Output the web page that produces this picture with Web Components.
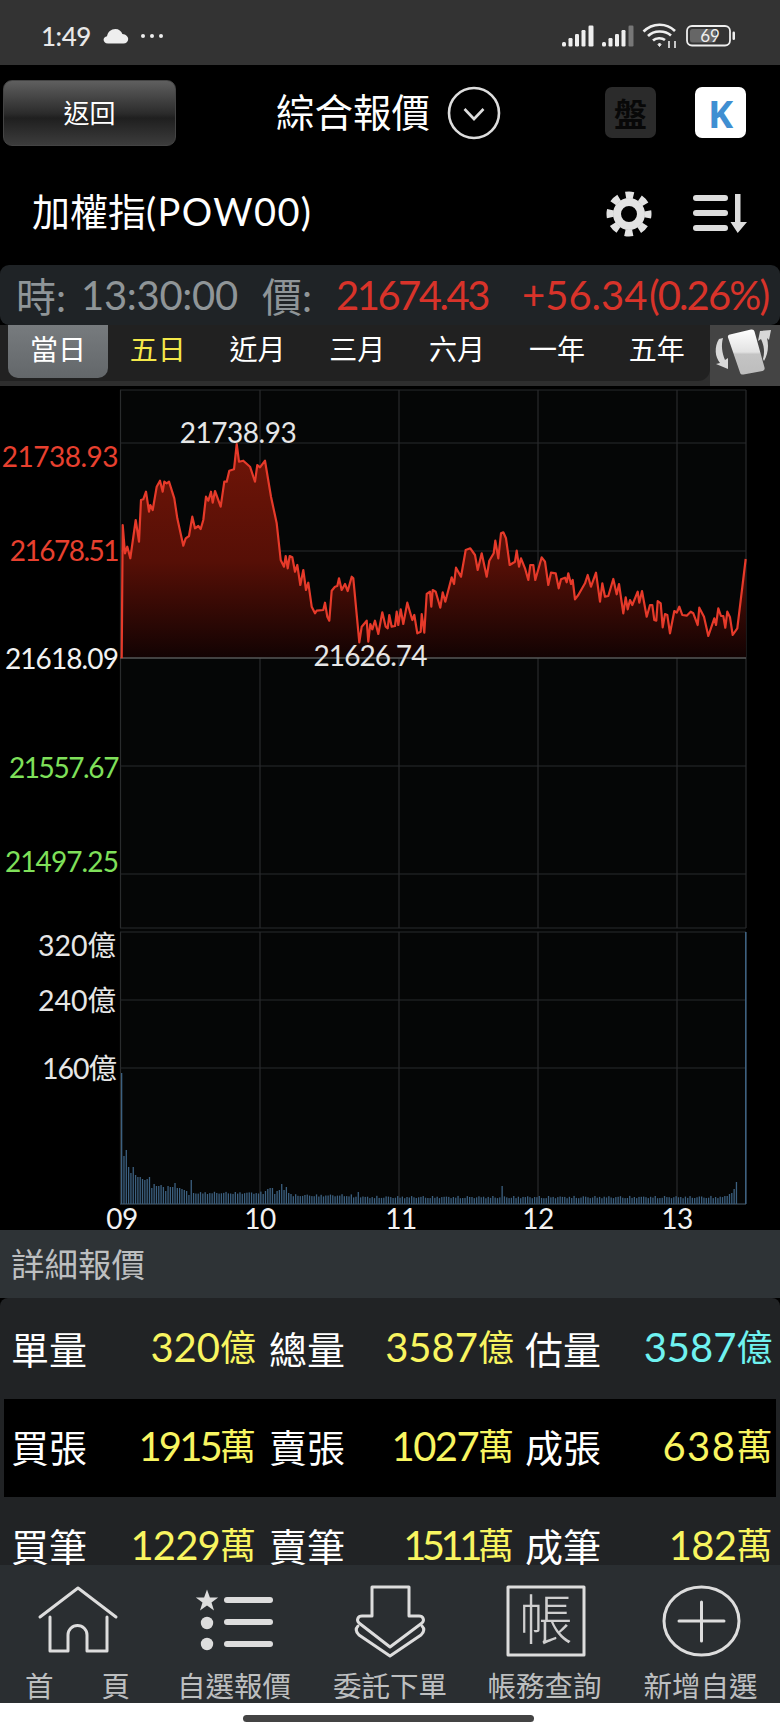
<!DOCTYPE html>
<html lang="zh-Hant">
<head>
<meta charset="utf-8">
<title>綜合報價</title>
<style>
  html, body { margin: 0; padding: 0; background: #000; }
  body { width: 780px; height: 1734px; overflow: hidden; font-family: Lato, "Noto Sans CJK TC", sans-serif; color: #fff; }
</style>
</head>
<body>
<x-status-bar></x-status-bar>
<x-nav-bar title-text="綜合報價" back-text="返回"></x-nav-bar>
<x-symbol-bar>加權指<span style="letter-spacing:1.4px">(POW00)</span></x-symbol-bar>
<x-quote-bar time="13:30:00" price="21674.43" change="+56.34" percent="(0.26%)"></x-quote-bar>
<x-range-tabs></x-range-tabs>
<x-quote-chart></x-quote-chart>
<x-section-title>詳細報價</x-section-title>
<x-stat-table>
  <x-stat-row>
    <x-stat label="單量" value="320" unit="億"></x-stat>
    <x-stat label="總量" value="3587" unit="億"></x-stat>
    <x-stat label="估量" value="3587" unit="億" tone="cyan"></x-stat>
  </x-stat-row>
  <x-stat-row dark>
    <x-stat label="買張" value="1915" unit="萬" tight="-2.8"></x-stat>
    <x-stat label="賣張" value="1027" unit="萬" tight="-1.6"></x-stat>
    <x-stat label="成張" value="638" unit="萬" tight="1.5"></x-stat>
  </x-stat-row>
  <x-stat-row>
    <x-stat label="買筆" value="1229" unit="萬" tight="-.8"></x-stat>
    <x-stat label="賣筆" value="1511" unit="萬" tight="-4.5"></x-stat>
    <x-stat label="成筆" value="182" unit="萬" tight="-.6"></x-stat>
  </x-stat-row>
</x-stat-table>
<x-tab-bar>
  <x-tab-item icon="home" wide>首頁</x-tab-item>
  <x-tab-item icon="list">自選報價</x-tab-item>
  <x-tab-item icon="order">委託下單</x-tab-item>
  <x-tab-item icon="account">帳務查詢</x-tab-item>
  <x-tab-item icon="plus">新增自選</x-tab-item>
</x-tab-bar>
<x-home-indicator></x-home-indicator>

<script>
  const FONT = 'Lato, "Noto Sans CJK TC", sans-serif';

  function signalBars(lastColor) {
    return `<svg width="33" height="22" viewBox="0 0 33 22">
      <rect x="0" y="17" width="4" height="4.5" rx="1.5" fill="#eee"/>
      <rect x="6.5" y="13" width="4" height="8.5" rx="1.2" fill="#eee"/>
      <rect x="13" y="9" width="4" height="12.5" rx="1.2" fill="#eee"/>
      <rect x="19.5" y="5" width="4" height="16.5" rx="1.2" fill="#eee"/>
      <rect x="26.5" y="0.5" width="5" height="21" rx="1.2" fill="${lastColor}"/>
    </svg>`;
  }

  customElements.define("x-status-bar", class extends HTMLElement {
    connectedCallback() {
      this.attachShadow({ mode: "open" }).innerHTML = `
        <style>
          :host { display: flex; align-items: center; height: 65px; padding: 7px 44px 0 41px; box-sizing: border-box; background: #333; color: #e8e8e8; font: 500 26px ${FONT}; }
          .time { width: 62px; letter-spacing: -.5px; }
          .right { margin-left: auto; display: flex; align-items: center; }
          svg { display: block; }
          .batt { position: relative; width: 50px; height: 22px; margin-left: 8px; }
          .batt span { position: absolute; left: 10px; top: 0; width: 28px; text-align: center; font: 17px/21px ${FONT}; color: #eee; }
        </style>
        <span class="time">1:49</span>
        <svg width="26" height="16" viewBox="0 0 26 16"><path d="M5 15.5C2 15.5 .6 13.6 .6 11.8 .6 9.8 2 8.5 4 8.2 4.8 4 8 1 12.4 1c3.4 0 6 2 7 5 3.4 .1 5.8 2.6 5.8 5 0 2.5-2 4.5-4.8 4.5z" fill="#eee"/></svg>
        <svg width="24" height="6" viewBox="0 0 24 6" style="margin-left:11px"><circle cx="3" cy="3" r="2" fill="#eee"/><circle cx="12" cy="3" r="2" fill="#eee"/><circle cx="21" cy="3" r="2" fill="#eee"/></svg>
        <div class="right">
          ${signalBars("#eee")}
          <span style="width:7px"></span>
          ${signalBars("#777")}
          <svg width="36" height="26" viewBox="0 0 36 26" style="margin-left:7px" fill="none" stroke="#eee" stroke-width="2.6">
            <path d="M1.5 8.5C10.5 -.5 24.5 -.5 33 8"/>
            <path d="M6 13C12 7 23 7 29 12.5"/>
            <path d="M11 17.5C14 14.5 20 14.5 23 17"/>
            <path d="M16 21.5l1.5-1.5 1.5 1.5-1.5 2z" fill="#eee" stroke-width="1"/>
            <path d="M27 18v7M33 18v7" stroke-width="1.6"/>
          </svg>
          <div class="batt">
            <svg width="50" height="22" viewBox="0 0 50 22">
              <rect x="1" y="1" width="43" height="19.5" rx="5" fill="none" stroke="#eee" stroke-width="1.8"/>
              <rect x="4" y="4" width="26" height="13.5" rx="2.5" fill="#666"/>
              <rect x="46.5" y="6.5" width="2.5" height="8.5" rx="1.2" fill="#eee"/>
            </svg>
            <span>69</span>
          </div>
        </div>`;
    }
  });

  customElements.define("x-nav-bar", class extends HTMLElement {
    connectedCallback() {
      this.attachShadow({ mode: "open" }).innerHTML = `
        <style>
          :host { display: flex; align-items: center; height: 95px; box-sizing: border-box; padding: 0 34px 0 3px; background: #000; color: #fff; }
          .back { width: 173px; height: 66px; margin-top: 1px; padding-bottom: 3px; border-radius: 9px; border: 1px solid #444; box-sizing: border-box;
            background: linear-gradient(#5f5f5f, #2c2c2c 50%, #1f1f1f 58%, #3c3c3c);
            display: flex; align-items: center; justify-content: center; font-size: 26px; }
          .title { margin: -6px 0 0 100px; font-size: 38.5px; width: 171px; white-space: nowrap; }
          .badge { width: 51px; height: 51px; border-radius: 7px; display: flex; align-items: center; justify-content: center; }
          .pan { margin-left: 104px; background: #2b2b2b; color: #080808; font-size: 33px; font-weight: 700; }
          .k { margin-left: 39px; background: #fff; color: #3f8fd2; font: 700 38px "Open Sans", sans-serif; }
          svg { display: block; }
        </style>
        <div class="back">${this.getAttribute("back-text")}</div>
        <div class="title">${this.getAttribute("title-text")}</div>
        <svg width="54" height="54" viewBox="0 0 54 54" fill="none" stroke="#ddd" stroke-width="2.6">
          <circle cx="27" cy="27" r="25"/>
          <path d="M17.5 23l9.5 10 9.5-10"/>
        </svg>
        <div class="badge pan">盤</div>
        <div class="badge k">K</div>`;
    }
  });

  customElements.define("x-symbol-bar", class extends HTMLElement {
    connectedCallback() {
      this.attachShadow({ mode: "open" }).innerHTML = `
        <style>
          :host { display: flex; align-items: center; height: 105px; box-sizing: border-box; padding: 0 32px; background: #000; color: #fff; font-size: 38px; }
          .name { flex: 1; margin-top: -6px; white-space: nowrap; }
          svg { display: block; margin-top: 3px; }
        </style>
        <div class="name"><slot></slot></div>
        <svg width="46" height="46" viewBox="-23 -23 46 46" fill="none" stroke="#e2e2e2">
          <circle r="12" stroke-width="8"/>
          <circle r="19" stroke-width="7" stroke-dasharray="8 6.92" stroke-dashoffset="4"/>
        </svg>
        <svg width="56" height="40" viewBox="0 0 56 40" style="margin-left:40px">
          <g fill="#ddd">
            <rect x="1" y="1" width="35" height="6" rx="3"/>
            <rect x="1" y="16" width="35" height="6" rx="3"/>
            <rect x="1" y="31" width="35" height="6" rx="3"/>
            <path d="M43 0h5.5v28H55L45.7 39 38.5 28H43z"/>
          </g>
        </svg>`;
    }
  });

  customElements.define("x-quote-bar", class extends HTMLElement {
    connectedCallback() {
      const a = (n) => this.getAttribute(n);
      this.attachShadow({ mode: "open" }).innerHTML = `
        <style>
          :host { display: flex; align-items: center; height: 60px; box-sizing: border-box; padding-left: 16px; background: #1f2326; border-radius: 9px; color: #8f9598; font-size: 40px; white-space: nowrap; }
          span { display: block; }
          .red { color: #d8332a; }
        </style>
        <span style="width:65px">時:</span>
        <span style="width:181px;letter-spacing:-.3px">${a("time")}</span>
        <span style="width:74px">價:</span>
        <span class="red" style="width:186px;letter-spacing:-2.5px">${a("price")}</span>
        <span class="red" style="width:127px">${a("change")}</span>
        <span class="red" style="letter-spacing:-1.9px">${a("percent")}</span>`;
    }
  });

  customElements.define("x-range-tabs", class extends HTMLElement {
    connectedCallback() {
      const labels = ["當日", "五日", "近月", "三月", "六月", "一年", "五年"];
      this.attachShadow({ mode: "open" }).innerHTML = `
        <style>
          :host { display: flex; height: 61px; background: #2e2e2e; color: #fff; font-size: 28px; }
          .tabs { width: 710px; height: 56px; box-sizing: border-box; padding-left: 8px; background: #212121; border-radius: 0 0 12px 0; display: flex; }
          .tab { width: 99.8px; height: 53px; padding-bottom: 8px; box-sizing: border-box; display: flex; align-items: center; justify-content: center; }
          .on { background: linear-gradient(#777b7e, #63676a); border-radius: 0 0 10px 10px; }
          .tab:nth-child(2) { color: #f4e84a; }
          .rotate { flex: 1; background: #444; }
          svg { display: block; }
        </style>
        <div class="tabs">
          ${labels.map((t, i) => `<div class="tab ${i == 0 ? "on" : ""}">${t}</div>`).join("")}
        </div>
        <div class="rotate">
          <svg width="70" height="61" viewBox="0 0 70 61">
            <defs><linearGradient id="ph" x1="0" y1="0" x2="0" y2="1"><stop offset="0" stop-color="#fff"/><stop offset=".5" stop-color="#e2e2e2"/><stop offset=".55" stop-color="#c4c4c4"/><stop offset="1" stop-color="#bdbdbd"/></linearGradient></defs>
            <path d="M9 14C4 22 5 32 10 38l-4 1 12 5 0-11-3 2C12 28 11 20 13 13z" fill="#d8d8d8"/>
            <path d="M50 6l11-1-2 10-2-2c2 8 1 16-3 23l-1-2c2-7 1-14-2-20l-3 2z" fill="#d8d8d8"/>
            <path d="M20 9.5l21-5c2-.4 3 .4 3.5 2l10 36c.5 2-.3 3-2 3.5l-19 3.5c-2 .3-3-.3-3.5-2L18 12.5c-.4-1.5 .3-2.6 2-3z" fill="url(#ph)"/>
          </svg>
        </div>`;
    }
  });

  // traced line of the day chart: each run has its own offset and 3x coordinates
  const RUNS = [
    { ox: 115, oy: 430, pts: "20,685 23,285 30,370 37,350 46,385 62,270 72,335 78,210 85,208 93,185 102,245 106,225 113,240 125,170 135,152 143,185 148,155 155,160 162,155 178,205 187,265 205,347 212,325 222,318 232,260 240,295 250,288 257,297 265,270 273,200 280,212 288,185 293,218 300,183 317,230 328,155 335,155 343,122 357,118 365,42 372,95 385,92 405,110 420,155 427,105 435,112 450,92 468,200 485,280 497,390 507,410 512,378 518,415 524,378 532,382 540,425 547,405 556,465 565,420 573,480 580,458 590,530 600,550 605,542 625,540 630,518 637,560 643,572 650,482 660,470 667,468 672,445" },
    { ox: 335, oy: 510, pts: "12,205 20,240 30,222 38,243 50,200 55,205 73,397 80,350 95,332 100,395 106,342 112,358 120,332 130,372 142,307 152,350 158,355 163,315 170,350 180,348 185,305 190,345 197,298 205,342 217,278 232,330 238,315 247,370 257,365 260,312 268,368 275,252 285,245 289,290 293,240 302,245 316,293 323,247 331,275 350,202 357,222 363,173 378,200 392,120 406,115 420,135 428,180 440,130 455,200 463,152 476,130 481,92 490,145 498,70 505,67 513,85 524,165 540,155 545,122 552,170 558,145 570,175 580,210 586,165 595,165 601,210 620,142 630,155" },
    { ox: 545, oy: 530, pts: "10,165 18,128 32,130 41,175 48,148 60,143 65,157 70,130 78,162 83,150 90,208 100,195 120,160 128,135 138,170 153,128 165,215 172,160 180,200 190,198 205,147 215,193 222,162 235,250 242,202 248,238 255,210 262,225 278,185 283,218 291,183 305,260 315,225 322,225 328,270 334,272 338,213 347,220 353,292 360,252 367,255 375,310 388,243 395,248 403,230 412,255 425,257 437,245 445,250 458,285 463,233 477,260 490,318 508,265 513,285 520,235 528,258 535,258 541,293 547,245 555,262 563,315 577,295 602,87" },
  ];

  function linePoints() {
    const out = [];
    for (const run of RUNS) {
      for (const p of run.pts.split(" ")) {
        const [x, y] = p.split(",").map(Number);
        out.push((run.ox + x / 3).toFixed(1) + "," + (run.oy + y / 3).toFixed(1));
      }
    }
    return out.join(" ");
  }

  const FIRST_BARS = [131, 48, 54, 37, 31, 37, 29, 27, 27, 25, 24, 25, 27, 16, 20, 18, 18, 19, 17, 13, 18, 17, 17, 21, 16, 16, 15, 14, 13, 9, 24, 11];
  const BUMP_BARS = { 62: 13, 63: 15, 64: 16, 65: 16, 66: 10, 67: 13, 68: 14, 69: 20, 70: 14, 71: 17, 72: 11, 73: 10, 102: 12, 164: 18, 260: 8, 261: 8, 262: 10, 263: 11, 264: 15, 265: 22 };

  function volumeBars() {
    let s = "";
    for (let i = 0; i < 266; i++) {
      let h = FIRST_BARS[i] || BUMP_BARS[i];
      if (!h) {
        const base = i < 62 ? 10 : i < 100 ? 7.5 : 5.8;
        h = base + 2.4 * Math.abs(Math.sin(i * 1.7) * Math.cos(i * 0.63));
      }
      s += `<rect x="${(121 + i * 2.32).toFixed(2)}" y="${(1204 - h).toFixed(1)}" width="1.3" height="${h.toFixed(1)}"/>`;
    }
    return s + `<rect x="745" y="932" width="1.5" height="272"/>`;
  }

  customElements.define("x-quote-chart", class extends HTMLElement {
    connectedCallback() {
      const pts = linePoints();
      const verticals = [120.5, 260, 399, 538, 677, 746];
      const vLines = (y1, y2) => verticals.map((x) => `<line x1="${x}" x2="${x}" y1="${y1}" y2="${y2}"/>`).join("");
      const hLines = (ys) => ys.map((y) => `<line x1="120" x2="746" y1="${y}" y2="${y}"/>`).join("");
      // labels sit over the plot, x and y are page coordinates
      const end = (x, y, text, color, ls = -.5, cls = "") =>
        `<span class="${cls}" style="right:${780 - x}px;top:${y - 386}px;color:${color};letter-spacing:${ls}px;transform:translateY(-50%)">${text}</span>`;
      const mid = (x, y, text, color, ls = -.5) =>
        `<span style="left:${x}px;top:${y - 386}px;color:${color};letter-spacing:${ls}px;transform:translate(-50%,-50%)">${text}</span>`;
      this.attachShadow({ mode: "open" }).innerHTML = `
        <style>
          :host { display: block; position: relative; height: 844px; background: #000; }
          svg { display: block; }
          span { position: absolute; font-size: 28px; line-height: 34px; white-space: nowrap; }
          .vol { font-size: 28.5px; }
        </style>
        <svg width="780" height="844" viewBox="0 386 780 844">
          <defs>
            <linearGradient id="area" x1="0" y1="0" x2="0" y2="1">
              <stop offset="0" stop-color="#701508"/>
              <stop offset=".55" stop-color="#560f06"/>
              <stop offset="1" stop-color="#120303"/>
            </linearGradient>
          </defs>
          <rect x="120" y="390" width="626" height="814" fill="#050606"/>
          <g stroke="#292b2c" stroke-width="1.2">
            ${vLines(390, 928)}${hLines([390, 443, 551, 766, 874, 928])}
            ${vLines(932, 1204)}${hLines([932, 1000, 1068])}
          </g>
          <polygon points="${pts} 746,658 121,658" fill="url(#area)"/>
          <line x1="120" x2="746" y1="658" y2="658" stroke="#565859" stroke-width="1.5"/>
          <line x1="120" x2="746" y1="1204" y2="1204" stroke="#34404a" stroke-width="1.5"/>
          <polyline points="${pts}" fill="none" stroke="#e63a2a" stroke-width="2.2" stroke-linejoin="round"/>
          <g fill="#3c6080">${volumeBars()}</g>
        </svg>
        ${end(118, 456, "21738.93", "#e8402f")}
        ${end(118, 550, "21678.51", "#e8402f", -1.5)}
        ${end(118, 658, "21618.09", "#f2f2f2", -.9)}
        ${end(118, 767, "21557.67", "#7fe05a", -1.4)}
        ${end(118, 861, "21497.25", "#7fe05a", -.9)}
        ${mid(238, 432, "21738.93", "#e6e6e6")}
        ${mid(370, 655, "21626.74", "#e6e6e6", -.9)}
        ${end(116, 945, "320億", "#e6e6e6", 0, "vol")}
        ${end(116, 1000, "240億", "#e6e6e6", 0, "vol")}
        ${end(116, 1068, "160億", "#e6e6e6", -1, "vol")}
        ${mid(122, 1218, "09", "#f2f2f2")}
        ${mid(260, 1218, "10", "#f2f2f2")}
        ${mid(401, 1218, "11", "#f2f2f2")}
        ${mid(538, 1218, "12", "#f2f2f2")}
        ${mid(677, 1218, "13", "#f2f2f2")}`;
    }
  });

  customElements.define("x-section-title", class extends HTMLElement {
    connectedCallback() {
      this.attachShadow({ mode: "open" }).innerHTML = `
        <style>
          :host { display: flex; align-items: center; height: 68px; box-sizing: border-box; padding: 0 0 4px 11px; background: #2e3336; color: #bdbfc0; font-size: 33.5px; }
        </style>
        <slot></slot>`;
    }
  });

  customElements.define("x-stat-table", class extends HTMLElement {
    connectedCallback() {
      this.attachShadow({ mode: "open" }).innerHTML = `
        <style>
          :host { display: block; height: 267px; overflow: hidden; background: #212325; border-radius: 8px 8px 0 0; }
        </style>
        <slot></slot>`;
    }
  });

  customElements.define("x-stat-row", class extends HTMLElement {
    connectedCallback() {
      this.attachShadow({ mode: "open" }).innerHTML = `
        <style>
          :host { display: grid; grid-template-columns: 245px 245px 245.5px; column-gap: 13px; align-items: center; height: 98px; padding: 0 7px 0 11px; --label-shift: -3px; }
          :host(:first-child) { height: 101px; --label-shift: 1px; }
          :host(:last-child) { height: 68px; align-items: end; }
          :host([dark]) { margin: 0 4px; padding: 0 3px 0 7px; background: #000; }
        </style>
        <slot></slot>`;
    }
  });

  customElements.define("x-stat", class extends HTMLElement {
    connectedCallback() {
      const tone = this.getAttribute("tone") == "cyan" ? "#6ff2f0" : "#f8f560";
      const tight = this.getAttribute("tight") || 0;
      this.attachShadow({ mode: "open" }).innerHTML = `
        <style>
          :host { display: flex; align-items: center; justify-content: space-between; color: #fff; font-size: 38px; line-height: 1; white-space: nowrap; }
          :host(:last-child) { margin-left: -2px; }
          .label { margin-top: var(--label-shift); }
          .value { color: ${tone}; font-size: 40px; display: flex; align-items: center; margin-top: -4px; }
          .unit { font-size: 36px; }
        </style>
        <span class="label">${this.getAttribute("label")}</span>
        <span class="value"><span style="letter-spacing:${tight}px">${this.getAttribute("value")}</span><span class="unit">${this.getAttribute("unit")}</span></span>`;
    }
  });

  customElements.define("x-tab-bar", class extends HTMLElement {
    connectedCallback() {
      this.attachShadow({ mode: "open" }).innerHTML = `
        <style>
          :host { display: grid; grid-template-columns: repeat(5, 156px); height: 138px; box-sizing: border-box; padding-top: 20px; background: #2a2e31; }
        </style>
        <slot></slot>`;
    }
  });

  const TAB_ICONS = {
    home: `<path d="M40 32L78 3l38 29M50 32v34h18V50a9.5 9.5 0 0 1 19 0v16h20V32"/>`,
    list: `<g stroke="none" fill="#ddd">
        <path d="M51 4.5l2.9 8h8.3l-6.7 5 2.5 8-7-5-7 5 2.5-8-6.700-5h8.300z"/>
        <circle cx="51" cy="38" r="6.2"/><circle cx="51" cy="59" r="6.2"/>
        <rect x="68" y="12" width="49" height="6" rx="3"/><rect x="68" y="34" width="49" height="6" rx="3"/><rect x="68" y="56" width="49" height="6" rx="3"/>
      </g>`,
    order: `<path d="M60 31V2h37v29h10c4 0 6 4 3 7L78 62 47 38c-3-3-1-7 3-7z"/><path d="M46 41c-3 3-2 6 1 9l31 21 31-21c3-3 4-6 1-9"/>`,
    account: `<rect x="40" y="2" width="76" height="68"/><text x="78" y="55" text-anchor="middle">帳</text>`,
    plus: `<ellipse cx="77.5" cy="36" rx="37.5" ry="34"/><path d="M55 36h45M77.5 17v39"/>`,
  };

  customElements.define("x-tab-item", class extends HTMLElement {
    connectedCallback() {
      const nudge = { account: -3, plus: -3 }[this.getAttribute("icon")] || 0;
      this.attachShadow({ mode: "open" }).innerHTML = `
        <style>
          :host { display: block; color: #bdbfc0; font-size: 28.5px; }
          svg { display: block; }
          svg text { font-size: 54px; font-weight: 300; font-family: ${FONT}; fill: #cfcfcf; stroke: none; }
          .label { height: 38px; margin: 8px 0 0 ${nudge}px; line-height: 38px; text-align: center; white-space: nowrap; }
          :host([wide]) .label { display: flex; justify-content: space-between; padding: 0 26px 0 25px; }
        </style>
        <svg width="156" height="74" viewBox="0 0 156 74" fill="none" stroke="#ddd" stroke-width="3" stroke-linejoin="round" stroke-linecap="round">
          ${TAB_ICONS[this.getAttribute("icon")]}
        </svg>
        <div class="label"></div>`;
      const label = this.shadowRoot.querySelector(".label");
      if (this.hasAttribute("wide")) {
        label.innerHTML = [...this.textContent.trim()].map((c) => `<span>${c}</span>`).join("");
      } else {
        label.textContent = this.textContent.trim();
      }
    }
  });

  customElements.define("x-home-indicator", class extends HTMLElement {
    connectedCallback() {
      this.attachShadow({ mode: "open" }).innerHTML = `
        <style>
          :host { display: flex; justify-content: center; height: 31px; padding: 12px 3px 0 0; box-sizing: border-box; background: #fff; }
          div { width: 291px; height: 7px; border-radius: 4px; background: #444; }
        </style>
        <div></div>`;
    }
  });
</script>
</body>
</html>
